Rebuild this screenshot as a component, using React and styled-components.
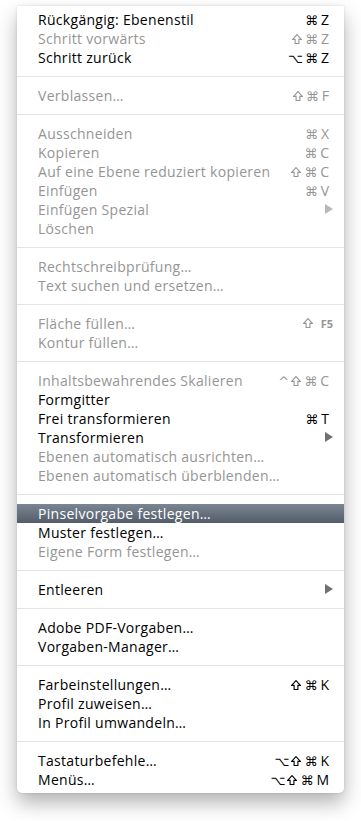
import styled, { createGlobalStyle } from 'styled-components'

const GlobalStyle = createGlobalStyle`
  html, body {
    margin: 0;
    padding: 0;
    background: #ffffff;
  }
  body {
    font-family: "Open Sans", "DejaVu Sans", sans-serif;
  }
`

const Page = styled.div`
  padding: 6px 0 40px 17px;
`

const MenuPanel = styled.div`
  width: 327px;
  box-sizing: border-box;
  padding: 4px 0 4px;
  background: #ffffff;
  border-radius: 0 0 5px 5px;
  box-shadow: 0 10px 20px rgba(0, 0, 0, 0.3), 0 0 3px rgba(0, 0, 0, 0.12);
`

const Row = styled.div`
  display: flex;
  align-items: flex-start;
  height: 19px;
  box-sizing: border-box;
  padding: 0 15px 0 21px;
  line-height: 19px;
  font-size: 14px;
  letter-spacing: 0.3px;
  white-space: nowrap;
  color: ${(p) => (p.$active ? '#ffffff' : p.$disabled ? '#959595' : '#000000')};
  background: ${(p) => (p.$active ? 'linear-gradient(#7c8692, #535d6a)' : 'transparent')};
`

const Label = styled.span`
  flex: 1;
`

const Shortcut = styled.span`
  display: flex;
  align-items: baseline;
  gap: 2px;
`

const Mod = styled.span`
  font-family: "DejaVu Sans", sans-serif;
  font-size: 13px;
  letter-spacing: 0;
`

const ShiftIcon = styled.svg`
  width: 10px;
  height: 10px;
  margin: 0 1px 0 0;
  fill: none;
  stroke: currentColor;
  stroke-width: 1.1;
`

const Key = styled.span`
  font-size: ${(p) => (p.$small ? '11px' : '14px')};
  font-weight: ${(p) => (p.$small ? 700 : 400)};
  margin-left: ${(p) => (p.$small ? '5px' : '1px')};
  margin-right: ${(p) => (p.$small ? '-4px' : '0')};
  letter-spacing: 0;
`

const Arrow = styled.svg`
  width: 8px;
  height: 10px;
  margin: 4px -4px 0 0;
  fill: ${(p) => (p.$disabled ? '#b8b8b8' : '#707070')};
`

const Separator = styled.div`
  height: 19px;
  display: flex;
  align-items: center;

  &::after {
    content: '';
    display: block;
    width: 100%;
    height: 1px;
    background: #e4e4e4;
  }
`

const MODS = '⌘⌥^'

const groups = [
  [
    { label: 'Rückgängig: Ebenenstil', keys: ['⌘', 'Z'] },
    { label: 'Schritt vorwärts', keys: ['⇧', '⌘', 'Z'], disabled: true },
    { label: 'Schritt zurück', keys: ['⌥', '⌘', 'Z'] },
  ],
  [{ label: 'Verblassen…', keys: ['⇧', '⌘', 'F'], disabled: true }],
  [
    { label: 'Ausschneiden', keys: ['⌘', 'X'], disabled: true },
    { label: 'Kopieren', keys: ['⌘', 'C'], disabled: true },
    { label: 'Auf eine Ebene reduziert kopieren', keys: ['⇧', '⌘', 'C'], disabled: true },
    { label: 'Einfügen', keys: ['⌘', 'V'], disabled: true },
    { label: 'Einfügen Spezial', submenu: true, disabled: true },
    { label: 'Löschen', disabled: true },
  ],
  [
    { label: 'Rechtschreibprüfung…', disabled: true },
    { label: 'Text suchen und ersetzen…', disabled: true },
  ],
  [
    { label: 'Fläche füllen…', keys: ['⇧', 'F5'], disabled: true },
    { label: 'Kontur füllen…', disabled: true },
  ],
  [
    { label: 'Inhaltsbewahrendes Skalieren', keys: ['^', '⇧', '⌘', 'C'], disabled: true },
    { label: 'Formgitter' },
    { label: 'Frei transformieren', keys: ['⌘', 'T'] },
    { label: 'Transformieren', submenu: true },
    { label: 'Ebenen automatisch ausrichten…', disabled: true },
    { label: 'Ebenen automatisch überblenden…', disabled: true },
  ],
  [
    { label: 'Pinselvorgabe festlegen…', active: true },
    { label: 'Muster festlegen…' },
    { label: 'Eigene Form festlegen…', disabled: true },
  ],
  [{ label: 'Entleeren', submenu: true }],
  [
    { label: 'Adobe PDF-Vorgaben…' },
    { label: 'Vorgaben-Manager…' },
  ],
  [
    { label: 'Farbeinstellungen…', keys: ['⇧', '⌘', 'K'] },
    { label: 'Profil zuweisen…' },
    { label: 'In Profil umwandeln…' },
  ],
  [
    { label: 'Tastaturbefehle…', keys: ['⌥', '⇧', '⌘', 'K'] },
    { label: 'Menüs…', keys: ['⌥', '⇧', '⌘', 'M'] },
  ],
]

// shift key drawn as an outlined up arrow, like the mac menu glyph
const Shift = () => (
  <ShiftIcon viewBox="0 0 10 10">
    <path d="M5 0.6 L9.4 5.4 L6.9 5.4 L6.9 9.5 L3.1 9.5 L3.1 5.4 L0.6 5.4 Z" />
  </ShiftIcon>
)

const MenuItem = ({ item }) => (
  <Row $disabled={item.disabled} $active={item.active}>
    <Label>{item.label}</Label>
    {item.keys && (
      <Shortcut>
        {item.keys.map((k, i) => {
          if (k === '⇧') return <Shift key={i} />
          if (MODS.includes(k)) return <Mod key={i}>{k}</Mod>
          return <Key key={i} $small={k.length > 1}>{k}</Key>
        })}
      </Shortcut>
    )}
    {item.submenu && (
      <Arrow $disabled={item.disabled} viewBox="0 0 8 10">
        <polygon points="0,0 8,5 0,10" />
      </Arrow>
    )}
  </Row>
)

const App = () => {
  return (
    <>
      <GlobalStyle />
      <Page>
        <MenuPanel>
          {groups.map((group, gi) => (
            <div key={gi}>
              {gi > 0 && <Separator />}
              {group.map((item) => (
                <MenuItem key={item.label} item={item} />
              ))}
            </div>
          ))}
        </MenuPanel>
      </Page>
    </>
  )
}

export default App
